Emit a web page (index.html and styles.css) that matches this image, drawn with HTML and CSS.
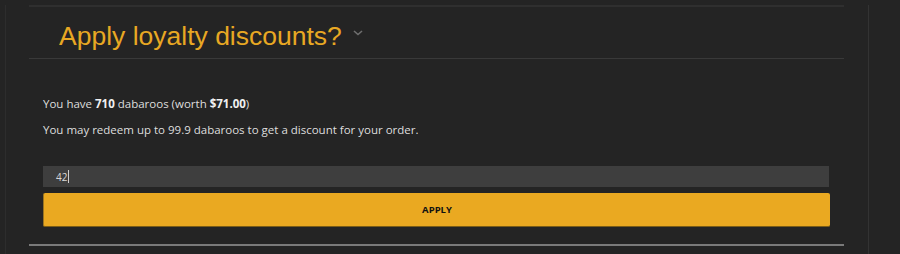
FILE: index.html
```html
<!DOCTYPE html>
<html>
<head>
<meta charset="utf-8">
<link rel="stylesheet" href="styles.css">
</head>
<body>
<div class="col">
  <div class="rule-top"></div>
  <div class="heading">
    <h2 class="title">Apply loyalty discounts?</h2>
    <svg class="chev" width="10" height="6" viewBox="0 0 10 6"><path d="M1 1 L5 4.5 L9 1" fill="none" stroke="#6f6f6f" stroke-width="1.6"/></svg>
  </div>
  <div class="body">
    <p class="line1">You have <b>710</b> dabaroos (worth <b>$71.00</b>)</p>
    <p class="line2">You may redeem up to 99.9 dabaroos to get a discount for your order.</p>
    <div class="input"><span class="val">42</span><span class="caret"></span></div>
    <button class="apply">APPLY</button>
  </div>
  <div class="rule-bottom"></div>
</div>
</body>
</html>
```
FILE: styles.css
```css
html, body {
  margin: 0;
  padding: 0;
  background: #242424;
  height: 254px;
  overflow: hidden;
}
.col {
  margin-left: 5px;
  height: 254px;
  border-left: 1px solid #2d2d2d;
  border-right: 1px solid #333;
  padding: 0 24px 0 23px;
  box-sizing: content-box;
  width: 815px;
  font-family: "Open Sans", sans-serif;
}
.rule-top {
  margin-top: 5px;
  height: 2px;
  background: #2f2f2f;
}
.heading {
  display: flex;
  align-items: flex-start;
  height: 51px;
  border-bottom: 1px solid #393939;
  padding-left: 30px;
}
.title {
  margin: 0;
  padding-top: 14px;
  font-family: "Liberation Sans", Arial, sans-serif;
  font-weight: normal;
  font-size: 26.5px;
  line-height: 31px;
  color: #e8a823;
}
.chev {
  margin-left: 11px;
  margin-top: 23px;
}
.body {
  padding: 0 14px;
}
.line1, .line2 {
  margin: 0;
  font-size: 11.5px;
  line-height: 16px;
  color: #dedede;
}
.line1 { margin-top: 37px; }
.line2 { margin-top: 10px; }
.line1 b { font-weight: bold; color: #f0f0f0; }
.input {
  margin-top: 28px;
  height: 21px;
  width: 786px;
  background: #3e3e3e;
  display: flex;
  align-items: center;
  padding-left: 13px;
  box-sizing: border-box;
  font-size: 10px;
  color: #d8d8d8;
}
.caret {
  width: 1px;
  height: 13px;
  background: #cfcfcf;
  margin-left: 1px;
}
.apply {
  display: block;
  margin-top: 6px;
  width: 787px;
  height: 34px;
  background: #eaa921;
  border: none;
  border-bottom: 1px solid #7a5c16;
  border-left: 1px solid #9a7420;
  border-radius: 2px;
  font-family: "Open Sans", sans-serif;
  font-weight: bold;
  font-size: 9.5px;
  color: #111;
  padding: 0;
}
.rule-bottom {
  margin-top: 17px;
  height: 2px;
  background: #7a7a7a;
}
```
